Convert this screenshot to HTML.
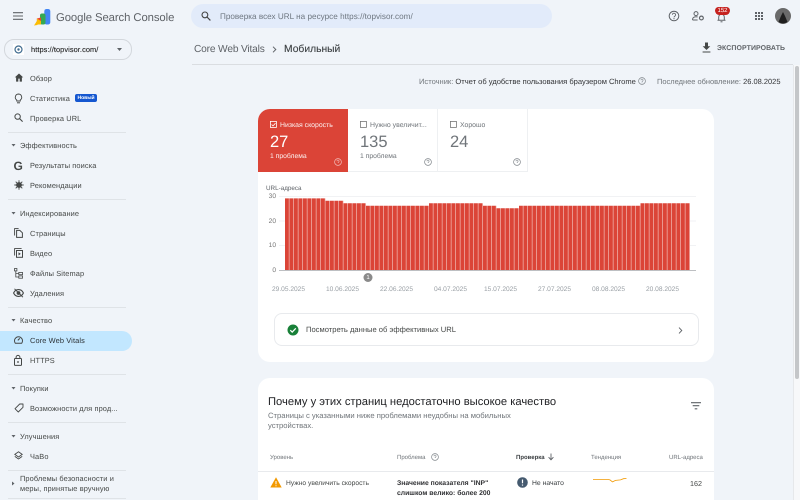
<!DOCTYPE html>
<html lang="ru"><head><meta charset="utf-8"><title>Core Web Vitals</title>
<style>
html,body{margin:0;padding:0;width:800px;height:500px;overflow:hidden;background:#f0f4f9}
body{position:relative;font-family:"Liberation Sans",sans-serif;text-rendering:geometricPrecision;color:#444746}
.t{position:absolute;white-space:nowrap;line-height:10px;height:10px;margin-top:1px}
.n{font-size:7.4px;left:30px;color:#444746;letter-spacing:.12px}
.h{font-size:7.4px;left:20px;color:#444746;letter-spacing:.12px}
.d{position:absolute;left:8px;width:118px;height:1px;background:#dfe3e7}
.b{position:absolute}
svg{position:absolute;overflow:visible}
.card{position:absolute;background:#fff;border-radius:12px}
.x{font-size:6.6px;color:#9aa0a6;top:284px}
.y{font-size:6.6px;color:#777;width:20px;text-align:right;left:256px}
.th{font-size:6px;color:#70757a;top:452px}
</style></head><body>

<!-- top bar -->
<svg style="left:13px;top:12px" width="10" height="8" viewBox="0 0 10 8"><path d="M0 .7h10M0 4h10M0 7.3h10" stroke="#5f6368" stroke-width="1.1"/></svg>
<svg style="left:34px;top:9px" width="17" height="17" viewBox="0 0 17 17">
<rect x="10.3" y="0" width="6" height="15.5" rx="2.2" fill="#4285f4"/>
<rect x="6" y="4.5" width="5.5" height="11" rx="2" fill="#34a853"/>
<path d="M2.8 9.5l4.2-1v7H3z" fill="#ea4335"/>
<path d="M3 9.5l4 2.6v3.4H3z" fill="#fbbc04"/>
<path d="M0 16.5L3.5 11v5z" fill="#fbbc04"/>
</svg>
<div class="t" style="left:56px;top:11.500px;font-size:11.300px;color:#5f6368;line-height:11px;height:11px;letter-spacing:-.08px">Google Search Console</div>

<div class="b" style="left:191px;top:4px;width:361px;height:24px;border-radius:12px;background:#e2ebfa"></div>
<svg style="left:201px;top:11px" width="10" height="10" viewBox="0 0 10 10"><circle cx="3.900" cy="3.900" r="2.900" fill="none" stroke="#444" stroke-width="1.100"/><path d="M6 6l3.400 3.400" stroke="#444" stroke-width="1.200"/></svg>
<div class="t" style="left:220px;top:10.500px;font-size:8.150px;color:#6e7781;letter-spacing:.02px">Проверка всех URL на ресурсе https://topvisor.com/</div>

<svg style="left:668px;top:10px" width="12" height="12" viewBox="0 0 12 12"><circle cx="6" cy="6" r="4.800" fill="none" stroke="#5f6368" stroke-width="1"/><path d="M4.400 4.800a1.600 1.600 0 1 1 2.500 1.300c-.6.400-.9.700-.9 1.300" fill="none" stroke="#5f6368" stroke-width=".9"/><circle cx="6" cy="8.700" r=".6" fill="#5f6368"/></svg>
<svg style="left:692px;top:11px" width="13" height="10" viewBox="0 0 13 10"><circle cx="4" cy="2.600" r="2" fill="none" stroke="#5f6368" stroke-width="1"/><path d="M.6 9v-1c0-1.500 2-2.300 3.400-2.300.6 0 1.100.1 1.600.3" fill="none" stroke="#5f6368" stroke-width="1"/><path d="M.6 9h5" stroke="#5f6368"/><circle cx="9.400" cy="7" r="1.900" fill="none" stroke="#5f6368" stroke-width="1.200"/></svg>
<svg style="left:716px;top:12px" width="11" height="11" viewBox="0 0 11 11"><path d="M1.500 8.300h8M2.700 8V5a2.800 2.800 0 0 1 5.600 0v3" fill="none" stroke="#5f6368" stroke-width="1"/><path d="M4.500 9.800h2" stroke="#5f6368"/></svg>
<div class="b" style="left:715px;top:7px;width:15px;height:8px;border-radius:4px 4px 5px 5px;background:#c5221f;color:#fff;font-size:6px;line-height:8px;text-align:center">152</div>
<svg style="left:755px;top:12px" width="8" height="8" viewBox="0 0 8 8" fill="#5f6368"><rect x="0" width="2" height="2"/><rect x="3" width="2" height="2"/><rect x="6" width="2" height="2"/><rect x="0" y="3" width="2" height="2"/><rect x="3" y="3" width="2" height="2"/><rect x="6" y="3" width="2" height="2"/><rect x="0" y="6" width="2" height="2"/><rect x="3" y="6" width="2" height="2"/><rect x="6" y="6" width="2" height="2"/></svg>
<svg style="left:775px;top:8px" width="16" height="16" viewBox="0 0 16 16"><circle cx="8" cy="8" r="8" fill="#6a6a6a"/><path d="M3.500 14l2.500-6 2-4 2 4 2.500 6a8 8 0 0 1-9 0z" fill="#1f1f1f"/></svg>

<!-- property selector -->
<div class="b" style="left:4px;top:39px;width:126px;height:19px;border:1px solid #d3d7dc;border-radius:10px"></div>
<div class="b" style="left:13px;top:44px;width:11px;height:11px;background:#fff"></div>
<svg style="left:14px;top:45px" width="9" height="9" viewBox="0 0 9 9"><circle cx="4.500" cy="4.500" r="3.500" fill="none" stroke="#3f6b8f" stroke-width="1.200"/><circle cx="4.500" cy="4.500" r="1.200" fill="#3f6b8f"/></svg>
<div class="t" style="left:31px;top:43.500px;font-size:7.400px;color:#1f1f1f;letter-spacing:.08px;font-weight:400;-webkit-text-stroke:.1px #1f1f1f">https://topvisor.com/</div>
<svg style="left:117px;top:48px" width="5" height="3" viewBox="0 0 5 3"><path d="M0 0h5L2.500 3z" fill="#5f6368"/></svg>

<!-- sidebar -->
<svg style="left:14px;top:73px" width="10" height="9" viewBox="0 0 10 9"><path d="M5 .5L.8 4.400h1.300V8.600h2.200V5.600h1.400v3h2.200V4.400h1.300z" fill="#444746"/></svg>
<div class="t n" style="top:72.500px">Обзор</div>
<svg style="left:14px;top:93px" width="9" height="11" viewBox="0 0 9 11"><path d="M4.500 1a3.300 3.300 0 0 0-1.800 6v1h3.600V7a3.300 3.300 0 0 0-1.800-6z" fill="none" stroke="#444746" stroke-width=".9"/><path d="M3 9.800h3" stroke="#444746"/></svg>
<div class="t n" style="top:92.500px">Статистика</div>
<div class="b" style="left:75px;top:94px;width:22px;height:8px;border-radius:2px;background:#1557d0;color:#fff;font-size:5px;line-height:8px;text-align:center;font-weight:bold">Новый</div>
<svg style="left:14px;top:113px" width="9" height="9" viewBox="0 0 9 9"><circle cx="3.600" cy="3.600" r="2.700" fill="none" stroke="#444746"/><path d="M5.600 5.600l3 3" stroke="#444746" stroke-width="1.100"/></svg>
<div class="t n" style="top:112.500px">Проверка URL</div>
<div class="d" style="top:132px"></div>

<svg style="left:11px;top:144px" width="5" height="3" viewBox="0 0 5 3"><path d="M.5 0h4L2.500 2.500z" fill="#5f6368"/></svg>
<div class="t h" style="top:139.500px">Эффективность</div>
<div class="t" style="left:13.500px;top:158.500px;font-size:12px;line-height:12px;height:12px;font-weight:bold;color:#444746">G</div>
<div class="t n" style="top:159.500px">Результаты поиска</div>
<svg style="left:14px;top:180px" width="10" height="10" viewBox="0 0 10 10"><circle cx="5" cy="5" r="2.900" fill="#444746"/><path d="M5 .3v9.400M.3 5h9.400M1.700 1.700l6.600 6.600M8.300 1.700L1.700 8.300" stroke="#444746" stroke-width=".9"/></svg>
<div class="t n" style="top:179.500px">Рекомендации</div>
<div class="d" style="top:199px"></div>

<svg style="left:11px;top:212px" width="5" height="3" viewBox="0 0 5 3"><path d="M.5 0h4L2.500 2.500z" fill="#5f6368"/></svg>
<div class="t h" style="top:207.500px">Индексирование</div>
<svg style="left:14px;top:228px" width="9" height="10" viewBox="0 0 9 10"><path d="M.6 7.500V.6h4" fill="none" stroke="#444746" stroke-width=".9"/><path d="M2.600 2.400h3.200l2.600 2.400v4.600H2.600z" fill="none" stroke="#444746" stroke-width="1"/></svg>
<div class="t n" style="top:227.500px">Страницы</div>
<svg style="left:14px;top:248px" width="9" height="10" viewBox="0 0 9 10"><path d="M.6 7.500V.6h7" fill="none" stroke="#444746" stroke-width=".9"/><rect x="2.500" y="2.500" width="6" height="6.800" fill="none" stroke="#444746" stroke-width="1"/><path d="M4.500 4.300l2.300 1.600-2.300 1.600z" fill="#444746"/></svg>
<div class="t n" style="top:247.500px">Видео</div>
<svg style="left:14px;top:268px" width="9" height="11" viewBox="0 0 9 11"><rect x=".5" y=".5" width="2.400" height="2.400" fill="none" stroke="#444746" stroke-width=".8"/><path d="M1.800 3v6h3M1.800 5.600h3" fill="none" stroke="#444746" stroke-width=".8"/><rect x="4.800" y="4.400" width="3.700" height="2.300" fill="none" stroke="#444746" stroke-width=".8"/><rect x="4.800" y="7.900" width="3.700" height="2.300" fill="none" stroke="#444746" stroke-width=".8"/></svg>
<div class="t n" style="top:267.500px">Файлы Sitemap</div>
<svg style="left:13px;top:288px" width="11" height="10" viewBox="0 0 11 10"><path d="M.6 5C1.600 2.800 3.300 1.600 5.500 1.600S9.400 2.800 10.400 5C9.400 7.200 7.700 8.400 5.500 8.400S1.600 7.200.6 5z" fill="none" stroke="#444746" stroke-width="1.100"/><circle cx="5.500" cy="5" r="1.900" fill="#444746"/><path d="M1.500 .8l8.400 8.400" stroke="#444746" stroke-width="1"/></svg>
<div class="t n" style="top:287.500px">Удаления</div>
<div class="d" style="top:307px"></div>

<svg style="left:11px;top:319px" width="5" height="3" viewBox="0 0 5 3"><path d="M.5 0h4L2.500 2.500z" fill="#5f6368"/></svg>
<div class="t h" style="top:314.500px">Качество</div>
<div class="b" style="left:0;top:331px;width:132px;height:20px;background:#c2e7ff;border-radius:0 10px 10px 0"></div>
<svg style="left:14px;top:335px" width="9" height="9" viewBox="0 0 9 9"><path d="M1.300 8.200h6.400a4 4 0 1 0-6.400 0z" fill="none" stroke="#444746" stroke-width="1"/><path d="M3.800 5.400l2-2" stroke="#444746" stroke-width="1.100"/></svg>
<div class="t n" style="top:334.500px;color:#2a2f33">Core Web Vitals</div>
<svg style="left:14px;top:355px" width="8" height="11" viewBox="0 0 8 11"><rect x=".5" y="3.500" width="7" height="6.900" rx=".6" fill="none" stroke="#444746"/><path d="M2.100 3.500V2.300a1.900 1.900 0 0 1 3.800 0v1.200" fill="none" stroke="#444746"/><circle cx="4" cy="7" r=".9" fill="#444746"/></svg>
<div class="t n" style="top:354.500px">HTTPS</div>
<div class="d" style="top:374px"></div>

<svg style="left:11px;top:387px" width="5" height="3" viewBox="0 0 5 3"><path d="M.5 0h4L2.500 2.500z" fill="#5f6368"/></svg>
<div class="t h" style="top:382.500px">Покупки</div>
<svg style="left:14px;top:403px" width="10" height="10" viewBox="0 0 10 10"><path d="M5.700 1h3.300v3.300L4.300 9 1 5.700z" fill="none" stroke="#444746" stroke-width=".9" stroke-linejoin="round"/></svg>
<div class="t n" style="top:402.500px">Возможности для прод...</div>
<div class="d" style="top:422px"></div>

<svg style="left:11px;top:435px" width="5" height="3" viewBox="0 0 5 3"><path d="M.5 0h4L2.500 2.500z" fill="#5f6368"/></svg>
<div class="t h" style="top:430.500px">Улучшения</div>
<svg style="left:14px;top:451px" width="9" height="10" viewBox="0 0 9 10"><path d="M4.500 .8L8.200 3.400 4.500 6 .8 3.400z" fill="none" stroke="#444746" stroke-width=".9"/><path d="M.8 5.400L4.500 8l3.700-2.600" fill="none" stroke="#444746" stroke-width=".9"/></svg>
<div class="t n" style="top:450.500px">ЧаВо</div>
<div class="d" style="top:470px"></div>

<svg style="left:12px;top:481px" width="3" height="5" viewBox="0 0 3 5"><path d="M0 .5l2.500 2L0 4.500z" fill="#5f6368"/></svg>
<div class="t h" style="top:472.500px">Проблемы безопасности и</div>
<div class="t h" style="top:482.500px">меры, принятые вручную</div>
<div class="d" style="top:498px"></div>

<!-- page header -->
<div class="t" style="left:194px;top:42.500px;font-size:10.200px;line-height:12px;height:12px;color:#5f6368;letter-spacing:-.17px">Core Web Vitals</div>
<svg style="left:272px;top:46px" width="5" height="7" viewBox="0 0 5 7"><path d="M1 .7l2.800 2.800L1 6.300" fill="none" stroke="#5f6368" stroke-width="1"/></svg>
<div class="t" style="left:284px;top:42.500px;font-size:10.300px;line-height:12px;height:12px;color:#3c4043;-webkit-text-stroke:.12px #3c4043">Мобильный</div>
<svg style="left:702px;top:42px" width="9" height="11" viewBox="0 0 9 11"><path d="M3 .5h3v3.700h2.300L4.500 8 .7 4.200H3z" fill="#444746"/><path d="M.6 10h7.800" stroke="#444746" stroke-width="1"/></svg>
<div class="t" style="left:717px;top:42.500px;font-size:6.950px;color:#5f6368;font-weight:bold;letter-spacing:.1px">ЭКСПОРТИРОВАТЬ</div>
<div class="b" style="left:192px;top:64px;width:601px;height:1px;background:#dadde1"></div>

<div class="b" style="left:793px;top:65px;width:7px;height:435px;background:#f7f8fa;border-left:1px solid #e6e8eb;box-sizing:border-box"></div>
<div class="b" style="left:794.500px;top:66px;width:4px;height:313px;background:#c4c6c9;border-radius:2px"></div>

<div class="t" style="left:419px;top:75.500px;font-size:7.550px;color:#70757a">Источник: <span style="color:#303134">Отчет об удобстве пользования браузером Chrome</span></div>
<svg style="left:638px;top:77px" width="8" height="8" viewBox="0 0 8 8"><circle cx="4" cy="4" r="3.400" fill="none" stroke="#80868b" stroke-width=".7"/><path d="M2.900 3.200a1.100 1.100 0 1 1 1.700.9c-.4.300-.6.500-.6.900" fill="none" stroke="#80868b" stroke-width=".6"/><circle cx="4" cy="5.900" r=".4" fill="#80868b"/></svg>
<div class="t" style="left:657px;top:75.500px;font-size:7.480px;color:#70757a">Последнее обновление: <span style="color:#303134">26.08.2025</span></div>

<!-- card 1 -->
<div class="card" style="left:258px;top:109px;width:456px;height:253px"></div>
<div class="b" style="left:258px;top:109px;width:90px;height:63px;background:#db4437;border-radius:12px 0 0 0"></div>
<div class="b" style="left:348px;top:109px;width:90px;height:63px;border-right:1px solid #eef0f2;border-bottom:1px solid #eef0f2;box-sizing:border-box"></div>
<div class="b" style="left:438px;top:109px;width:90px;height:63px;border-right:1px solid #eef0f2;border-bottom:1px solid #eef0f2;box-sizing:border-box"></div>

<svg style="left:270px;top:121px" width="7" height="7" viewBox="0 0 7 7"><rect x=".4" y=".4" width="6" height="6" fill="none" stroke="#fff" stroke-width=".8"/><path d="M1.600 3.500l1.400 1.400 2.500-2.700" fill="none" stroke="#fff" stroke-width=".8"/></svg>
<div class="t" style="left:280px;top:119.500px;font-size:6.900px;color:#fff;opacity:.92">Низкая скорость</div>
<div class="t" style="left:270px;top:131px;font-size:16.500px;line-height:20px;height:20px;color:#fff">27</div>
<div class="t" style="left:270px;top:151px;font-size:6.800px;color:#fff;opacity:.92">1 проблема</div>
<svg style="left:334px;top:158px" width="8" height="8" viewBox="0 0 8 8"><circle cx="4" cy="4" r="3.400" fill="none" stroke="#fff" stroke-opacity=".65" stroke-width=".7"/><path d="M2.900 3.200a1.100 1.100 0 1 1 1.700.9c-.4.300-.6.500-.6.900" fill="none" stroke="#fff" stroke-opacity=".65" stroke-width=".6"/></svg>

<svg style="left:360px;top:121px" width="7" height="7" viewBox="0 0 7 7"><rect x=".4" y=".4" width="6" height="6" fill="none" stroke="#777" stroke-width=".8"/></svg>
<div class="t" style="left:370px;top:119.500px;font-size:6.900px;color:#70757a">Нужно увеличит...</div>
<div class="t" style="left:360px;top:131px;font-size:16.500px;line-height:20px;height:20px;color:#70757a">135</div>
<div class="t" style="left:360px;top:151px;font-size:6.800px;color:#70757a">1 проблема</div>
<svg style="left:424px;top:158px" width="8" height="8" viewBox="0 0 8 8"><circle cx="4" cy="4" r="3.400" fill="none" stroke="#80868b" stroke-width=".7"/><path d="M2.900 3.200a1.100 1.100 0 1 1 1.700.9c-.4.300-.6.500-.6.900" fill="none" stroke="#80868b" stroke-width=".6"/></svg>

<svg style="left:450px;top:121px" width="7" height="7" viewBox="0 0 7 7"><rect x=".4" y=".4" width="6" height="6" fill="none" stroke="#777" stroke-width=".8"/></svg>
<div class="t" style="left:460px;top:119.500px;font-size:6.900px;color:#70757a">Хорошо</div>
<div class="t" style="left:450px;top:131px;font-size:16.500px;line-height:20px;height:20px;color:#70757a">24</div>
<svg style="left:513px;top:158px" width="8" height="8" viewBox="0 0 8 8"><circle cx="4" cy="4" r="3.400" fill="none" stroke="#80868b" stroke-width=".7"/><path d="M2.900 3.200a1.100 1.100 0 1 1 1.700.9c-.4.300-.6.500-.6.900" fill="none" stroke="#80868b" stroke-width=".6"/></svg>

<!-- chart -->
<div class="t" style="left:266px;top:182.500px;font-size:6.300px;color:#5f6368">URL-адреса</div>
<div class="t y" style="top:190.500px">30</div>
<div class="t y" style="top:215.500px">20</div>
<div class="t y" style="top:239.500px">10</div>
<div class="t y" style="top:264.500px">0</div>
<svg style="left:0;top:0" width="800" height="500">
<path d="M279 196.500h417M279 221h417M279 245.500h417" stroke="#f1f2f4" stroke-width="1"/>
<path d="M285 270V198.400h40.500V200.800h18V203.300h22.500V205.800h63V203.300h54V205.800h13.500V208.300h22.500V205.800h121.500V203.300H690V270z" fill="#db4437"/>
<line x1="285" y1="234" x2="690" y2="234" stroke="#fff" stroke-opacity=".62" stroke-width="74" stroke-dasharray="0 3.800 .7 0"/>
<path d="M279 270.500h417" stroke="#bdbfc2" stroke-width="1"/>
<circle cx="368" cy="277.500" r="4.500" fill="#8a8a8a"/>
</svg>
<div class="t" style="left:364px;top:271.500px;width:8px;text-align:center;font-size:6px;color:#fff">1</div>
<div class="t x" style="left:272px">29.05.2025</div>
<div class="t x" style="left:326px">10.06.2025</div>
<div class="t x" style="left:380px">22.06.2025</div>
<div class="t x" style="left:434px">04.07.2025</div>
<div class="t x" style="left:484px">15.07.2025</div>
<div class="t x" style="left:538px">27.07.2025</div>
<div class="t x" style="left:592px">08.08.2025</div>
<div class="t x" style="left:646px">20.08.2025</div>

<!-- link card -->
<div class="b" style="left:274px;top:313px;width:425px;height:33px;border:1px solid #e8eaed;border-radius:8px;box-sizing:border-box"></div>
<svg style="left:287px;top:324px" width="12" height="12" viewBox="0 0 12 12"><circle cx="6" cy="6" r="5.500" fill="#188038"/><path d="M3.300 6.200l1.900 1.900 3.600-3.800" fill="none" stroke="#fff" stroke-width="1.200"/></svg>
<div class="t" style="left:306px;top:324px;font-size:7.600px;color:#444746">Посмотреть данные об эффективных URL</div>
<svg style="left:678px;top:327px" width="5" height="7" viewBox="0 0 5 7"><path d="M1 .6l2.800 2.900L1 6.400" fill="none" stroke="#5f6368" stroke-width=".9"/></svg>

<!-- card 2 -->
<div class="card" style="left:258px;top:378px;width:456px;height:140px"></div>
<div class="t" style="left:268px;top:394.500px;font-size:11.200px;line-height:12px;height:12px;color:#202124">Почему у этих страниц недостаточно высокое качество</div>
<div class="t" style="left:268px;top:409.500px;font-size:7.650px;color:#70757a">Страницы с указанными ниже проблемами неудобны на мобильных</div>
<div class="t" style="left:268px;top:419.500px;font-size:7.650px;color:#70757a">устройствах.</div>
<svg style="left:691px;top:402px" width="10" height="8" viewBox="0 0 10 8"><path d="M0 .7h10M1.700 3.700h6.600M3.700 6.800h2.600" stroke="#5f6368" stroke-width="1.100"/></svg>

<div class="t th" style="left:270px">Уровень</div>
<div class="t th" style="left:397px">Проблема</div>
<svg style="left:431px;top:453px" width="8" height="8" viewBox="0 0 8 8"><circle cx="4" cy="4" r="3.400" fill="none" stroke="#80868b" stroke-width=".7"/><path d="M2.900 3.200a1.100 1.100 0 1 1 1.700.9c-.4.300-.6.500-.6.900" fill="none" stroke="#80868b" stroke-width=".6"/></svg>
<div class="t th" style="left:516px;color:#3c4043;font-weight:bold">Проверка</div>
<svg style="left:548px;top:453px" width="6" height="8" viewBox="0 0 6 8"><path d="M3 .5v6M.6 4.200L3 6.800l2.400-2.600" fill="none" stroke="#5f6368" stroke-width=".9"/></svg>
<div class="t th" style="left:591px">Тенденция</div>
<div class="t th" style="left:669px">URL-адреса</div>
<div class="b" style="left:258px;top:471px;width:456px;height:1px;background:#e8eaed"></div>

<svg style="left:270px;top:477px" width="12" height="11" viewBox="0 0 12 11"><path d="M6 .3L11.700 10.500H.3z" fill="#f29900"/><path d="M6 4v3.300M6 8.200v1" stroke="#fff" stroke-width="1"/></svg>
<div class="t" style="left:286px;top:477.500px;font-size:6.700px;color:#444746">Нужно увеличить скорость</div>
<div class="t" style="left:397px;top:477.500px;font-size:6.800px;font-weight:bold;color:#303134">Значение показателя "INP"</div>
<div class="t" style="left:397px;top:487.500px;font-size:6.800px;font-weight:bold;color:#303134">слишком велико: более 200</div>
<svg style="left:517px;top:477px" width="11" height="11" viewBox="0 0 11 11"><circle cx="5.500" cy="5.500" r="5.300" fill="#455a6f"/><path d="M5.500 2.500v3.800M5.500 7.500v1.100" stroke="#fff" stroke-width="1.200"/></svg>
<div class="t" style="left:532px;top:477.500px;font-size:6.800px;color:#3c4043">Не начато</div>
<svg style="left:593px;top:477px" width="34" height="6" viewBox="0 0 34 6"><path d="M0 2.500h15l2 .4 2.500 2 3-1.500 5-.5 3-1.200 3-.2" fill="none" stroke="#f29900" stroke-width=".8"/></svg>
<div class="t" style="left:680px;top:477.500px;width:22px;text-align:right;font-size:7.200px;color:#444746">162</div>

</body></html>
